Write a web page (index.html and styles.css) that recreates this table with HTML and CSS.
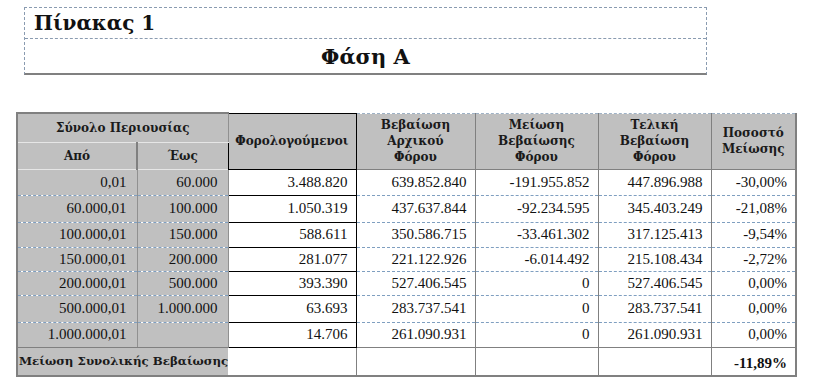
FILE: index.html
```html
<!DOCTYPE html>
<html lang="el">
<head>
<meta charset="utf-8">
<title>Πίνακας 1</title>
<link rel="stylesheet" href="styles.css">
</head>
<body>
<div class="page">
  <div class="title-box">
    <div class="title-row">Πίνακας 1</div>
    <div class="phase-row">Φάση Α</div>
  </div>

  <table class="grid">
    <colgroup>
      <col class="c1"><col class="c2"><col class="c3"><col class="c4"><col class="c5"><col class="c6"><col class="c7">
    </colgroup>
    <thead>
      <tr class="h1">
        <th colspan="2" class="lh top-solid">Σύνολο Περιουσίας</th>
        <th rowspan="2" class="fo">Φορολογούμενοι</th>
        <th rowspan="2" class="rh">Βεβαίωση<br>Αρχικού<br>Φόρου</th>
        <th rowspan="2" class="rh">Μείωση<br>Βεβαίωσης<br>Φόρου</th>
        <th rowspan="2" class="rh">Τελική<br>Βεβαίωση<br>Φόρου</th>
        <th rowspan="2" class="rh last">Ποσοστό<br>Μείωσης</th>
      </tr>
      <tr class="h2">
        <th class="lh">Από</th>
        <th class="lh">Έως</th>
      </tr>
    </thead>
    <tbody>
      <tr class="r1"><td class="l">0,01</td><td class="l">60.000</td><td class="fo">3.488.820</td><td class="v">639.852.840</td><td class="v">-191.955.852</td><td class="v">447.896.988</td><td class="v last">-30,00%</td></tr>
      <tr class="r2"><td class="l">60.000,01</td><td class="l">100.000</td><td class="fo">1.050.319</td><td class="v">437.637.844</td><td class="v">-92.234.595</td><td class="v">345.403.249</td><td class="v last">-21,08%</td></tr>
      <tr class="r3"><td class="l">100.000,01</td><td class="l">150.000</td><td class="fo">588.611</td><td class="v">350.586.715</td><td class="v">-33.461.302</td><td class="v">317.125.413</td><td class="v last">-9,54%</td></tr>
      <tr class="r4"><td class="l">150.000,01</td><td class="l">200.000</td><td class="fo">281.077</td><td class="v">221.122.926</td><td class="v">-6.014.492</td><td class="v">215.108.434</td><td class="v last">-2,72%</td></tr>
      <tr class="r5"><td class="l">200.000,01</td><td class="l">500.000</td><td class="fo">393.390</td><td class="v">527.406.545</td><td class="v">0</td><td class="v">527.406.545</td><td class="v last">0,00%</td></tr>
      <tr class="r6"><td class="l">500.000,01</td><td class="l">1.000.000</td><td class="fo">63.693</td><td class="v">283.737.541</td><td class="v">0</td><td class="v">283.737.541</td><td class="v last">0,00%</td></tr>
      <tr class="r7"><td class="l">1.000.000,01</td><td class="l"></td><td class="fo">14.706</td><td class="v">261.090.931</td><td class="v">0</td><td class="v">261.090.931</td><td class="v last">0,00%</td></tr>
      <tr class="total"><td colspan="2" class="tl">Μείωση Συνολικής Βεβαίωσης</td><td class="tv"></td><td class="tv"></td><td class="tv"></td><td class="tv"></td><td class="tv last strong">-11,89%</td></tr>
    </tbody>
  </table>
</div>
</body>
</html>
```

FILE: styles.css
```css
html, body {
  margin: 0;
  padding: 0;
  background: #ffffff;
}

.page {
  width: 830px;
  height: 391px;
  font-family: "Liberation Serif", "DejaVu Serif", "Times New Roman", serif;
  color: #111111;
  padding-top: 7px;
  box-sizing: border-box;
}

.title-box {
  margin-left: 24px;
  width: 683px;
  box-sizing: border-box;
  border-top: 1px dashed #8a9bb0;
  border-left: 1px dashed #8a9bb0;
  border-right: 1px dashed #8a9bb0;
  border-bottom: 2px solid #808080;
}

.title-row {
  height: 31px;
  border-bottom: 1px dashed #8a9bb0;
  font-family: "DejaVu Serif", "Liberation Serif", serif;
  font-weight: bold;
  font-size: 20px;
  line-height: 31px;
  padding-left: 9px;
  box-sizing: border-box;
}

.phase-row {
  height: 34px;
  text-align: center;
  font-family: "DejaVu Serif", "Liberation Serif", serif;
  font-weight: bold;
  font-size: 21px;
  line-height: 36px;
}

.grid {
  margin-left: 16px;
  margin-top: 37px;
  border-collapse: collapse;
  table-layout: fixed;
  width: 779px;
}

.c1 { width: 120px; }
.c2 { width: 91px; }
.c3 { width: 128px; }
.c4 { width: 119px; }
.c5 { width: 123px; }
.c6 { width: 113px; }
.c7 { width: 85px; }

.grid th,
.grid td {
  padding: 0 8px 0 4px;
  overflow: hidden;
  white-space: nowrap;
}

.grid th {
  background: #c0c0c0;
  font-family: "DejaVu Serif", "Liberation Serif", serif;
  font-size: 12px;
  font-weight: bold;
  text-align: center;
  line-height: 16px;
  padding: 0 2px;
  color: #1a1a1a;
}

.h1 { height: 29px; }
.h2 { height: 27px; }

.lh {
  border-left: 2px solid #808080;
  border-bottom: 1px solid #e6e6e6;
  border-right: 1px solid #909090;
}

.top-solid { border-top: 2px solid #808080; }

.h2 .lh { border-top: 1px solid #e6e6e6; }

.grid th.fo {
  border: 1px solid #000000;
}

.rh {
  border-top: 1px dashed #9fb2c6;
  border-right: 1px solid #808080;
  border-bottom: 1px solid #808080;
}

.grid .last {
  border-right: 2px solid #808080;
}

.grid td {
  font-size: 15px;
  text-align: right;
}

.r1 { height: 26px; }
.r2 { height: 27px; }
.r3 { height: 25px; }
.r4 { height: 24px; }
.r5 { height: 24px; }
.r6 { height: 27px; }
.r7 { height: 25px; }
.total { height: 29px; }

td.l {
  background: #c0c0c0;
  border-bottom: 1px dashed #7f9fc0;
  border-right: 1px solid #909090;
  border-left: 2px solid #808080;
  padding-right: 10px;
}

td.l + td.l {
  border-left: 1px solid #909090;
}

td.fo {
  border: 1px solid #000000;
  padding-right: 8px;
}

td.v {
  border-bottom: 1px dashed #7f9fc0;
  border-right: 1px solid #808080;
  padding-right: 8px;
}

.r7 td.l,
.r7 td.v {
  border-bottom: 1px solid #808080;
}

td.tl {
  background: #c0c0c0;
  border-left: 2px solid #808080;
  border-bottom: 2px solid #808080;
  border-top: 1px solid #808080;
  font-family: "DejaVu Serif", "Liberation Serif", serif;
  font-weight: bold;
  font-size: 11.8px;
  text-align: center;
  padding: 0 1px;
  color: #1a1a1a;
}

td.tv {
  border-right: 1px solid #808080;
  border-bottom: 2px solid #808080;
  vertical-align: bottom;
  padding-bottom: 3px;
}

.strong {
  font-weight: bold;
}
```
